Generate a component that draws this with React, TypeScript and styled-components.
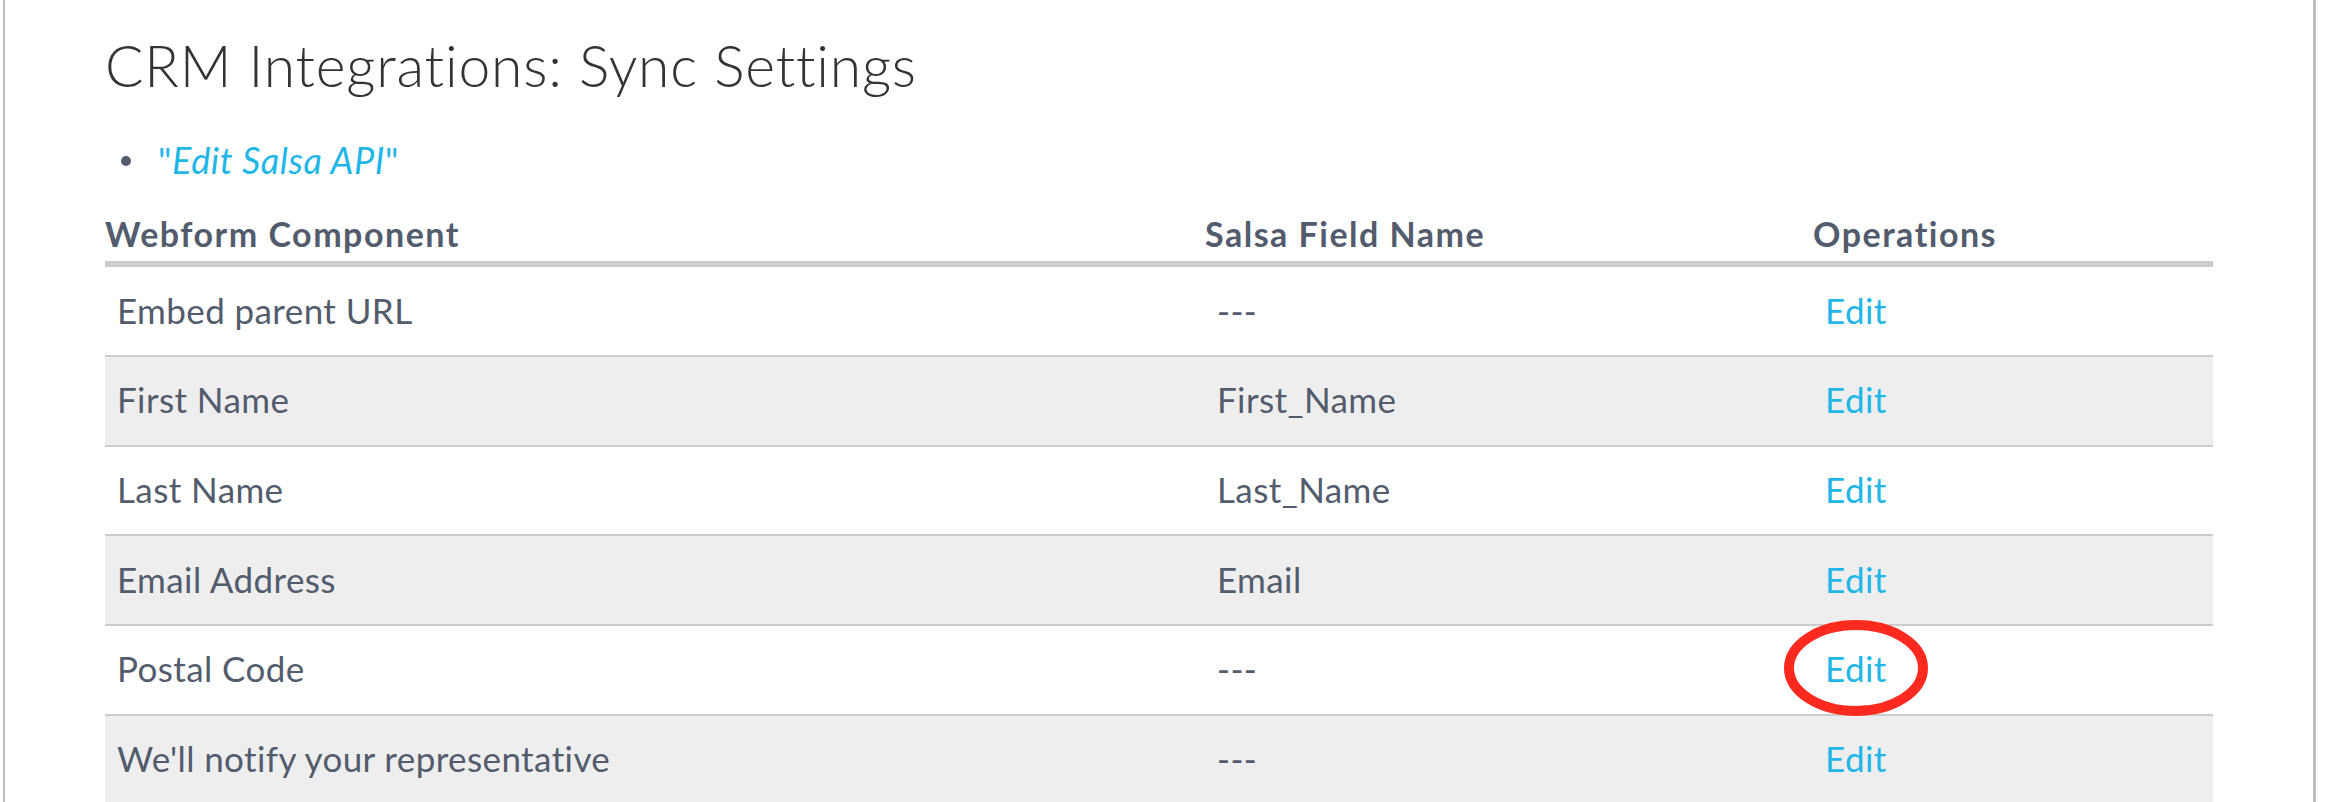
import styled, { createGlobalStyle } from "styled-components";

const GlobalStyle = createGlobalStyle`
  html, body {
    margin: 0;
    padding: 0;
    background: #ffffff;
    overflow: hidden;
  }
  body {
    font-family: "Lato", "Open Sans", sans-serif;
  }
`;

const Page = styled.div`
  height: 802px;
  padding-left: 3px;
  width: 2316px;
  box-sizing: border-box;
`;

const Panel = styled.section`
  height: 100%;
  box-sizing: border-box;
  border-left: 2px solid #bdbdbd;
  border-right: 3px solid #bdbdbd;
  padding: 31px 99px 0 100px;
`;

const Title = styled.h1`
  margin: 0;
  font-family: "Lato", sans-serif;
  font-weight: 300;
  font-size: 57px;
  letter-spacing: 0.8px;
  line-height: 1.2;
  color: #333333;
`;

const LinkList = styled.ul`
  list-style: none;
  margin: 40px 0 0;
  padding: 0 0 0 16px;
`;

const LinkItem = styled.li`
  display: flex;
  align-items: center;
  gap: 27px;
  font-size: 36px;
  letter-spacing: 0.6px;
  line-height: 1.2;
`;

const Bullet = styled.span`
  width: 10px;
  height: 10px;
  border-radius: 50%;
  background: #525c6d;
  flex: none;
`;

const Link = styled.a`
  color: #1fb6e8;
  text-decoration: none;
  cursor: pointer;

  em {
    font-style: italic;
  }
`;

const Table = styled.table`
  width: 2108px;
  table-layout: fixed;
  border-collapse: collapse;
  margin-top: 31px;
  color: #525c6d;
`;

const HeadCell = styled.th`
  text-align: left;
  vertical-align: bottom;
  font-size: 34px;
  font-weight: 700;
  letter-spacing: 1.5px;
  line-height: 1.2;
  padding: 0 0 7px 0;
  border-bottom: 6px solid #cccccc;
`;

const Row = styled.tr<{ $shaded: boolean }>`
  background: ${({ $shaded }) => ($shaded ? "#eeeeee" : "#ffffff")};
  border-top: 2px solid #cccccc;

  &:first-child {
    border-top: none;
  }
`;

const Cell = styled.td`
  height: 84.7px;
  padding: 0 0 3px 12px;
  vertical-align: middle;
  font-size: 35px;
  letter-spacing: 0.4px;
  line-height: 1.2;
  white-space: nowrap;
`;

const EditLink = styled(Link)`
  position: relative;
  display: inline-block;
`;

const Circle = styled.svg`
  position: absolute;
  left: 50%;
  top: 50%;
  width: 144px;
  height: 96px;
  transform: translate(-50%, -50%);
  pointer-events: none;
  overflow: visible;
`;

type Mapping = { component: string; field: string; circled?: boolean };

const mappings: Mapping[] = [
  { component: "Embed parent URL", field: "---" },
  { component: "First Name", field: "First_Name" },
  { component: "Last Name", field: "Last_Name" },
  { component: "Email Address", field: "Email" },
  { component: "Postal Code", field: "---", circled: true },
  { component: "We'll notify your representative", field: "---" },
];

export default function App() {
  return (
    <>
      <GlobalStyle />
      <Page>
        <Panel>
          <Title>CRM Integrations: Sync Settings</Title>

          <LinkList>
            <LinkItem>
              <Bullet />
              <Link>
                "<em>Edit Salsa API</em>"
              </Link>
            </LinkItem>
          </LinkList>

          <Table>
            <colgroup>
              <col style={{ width: 1100 }} />
              <col style={{ width: 608 }} />
              <col style={{ width: 400 }} />
            </colgroup>
            <thead>
              <tr>
                <HeadCell>Webform Component</HeadCell>
                <HeadCell>Salsa Field Name</HeadCell>
                <HeadCell>Operations</HeadCell>
              </tr>
            </thead>
            <tbody>
              {mappings.map((m, i) => (
                <Row key={m.component} $shaded={i % 2 === 1}>
                  <Cell>{m.component}</Cell>
                  <Cell>{m.field}</Cell>
                  <Cell>
                    <EditLink>
                      Edit
                      {m.circled && (
                        <Circle viewBox="0 0 144 96">
                          <ellipse cx="72" cy="48" rx="67" ry="43" fill="none" stroke="#ff2a1f" strokeWidth="10" />
                        </Circle>
                      )}
                    </EditLink>
                  </Cell>
                </Row>
              ))}
            </tbody>
          </Table>
        </Panel>
      </Page>
    </>
  );
}
